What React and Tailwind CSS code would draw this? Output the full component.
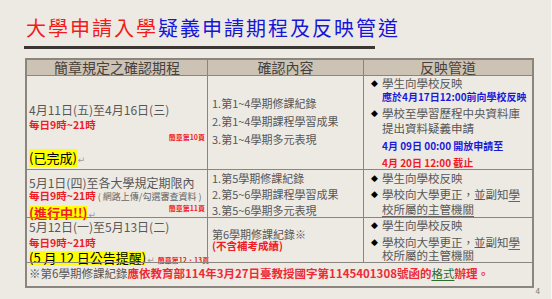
import React from "react";

function Ret() {
  return <span className="ml-[1px] font-['DejaVu_Sans',sans-serif] text-[9px] text-[#a09c98]">↵</span>;
}

function Bullet({ children, className = "" }) {
  return (
    <div className={"flex " + className}>
      <span className="-ml-[11px] w-[11px] shrink-0 font-['DejaVu_Sans',sans-serif] text-[9px] text-black">◆</span>
      <div>{children}</div>
    </div>
  );
}

const line = "border-[#8b8580]";

export default function App() {
  return (
    <div className="h-[299px] w-[552px] overflow-hidden border-r border-[#f8f7f4] bg-[#edeae4] font-['Noto_Sans_CJK_TC',sans-serif]">
      <div className="pl-[26px] pt-[16px] text-[20px] leading-[24px] tracking-[2px] whitespace-nowrap">
        <span className="text-[#f21b1b]">大學申請入學</span>
        <span className="text-[#1616d8]">疑義申請期程及反映管道</span>
      </div>
      <div className="ml-[24px] mt-[6px] h-[3px] w-[351px] bg-[#3b3633]" />

      <div
        className={
          "ml-[25px] mt-[9px] grid w-[509px] grid-cols-[180px_156px_169px] grid-rows-[15px_94px_48px_45px_24px] border-2 text-[#575757] " +
          line
        }
      >
        {/* header */}
        <div className="bg-[#cdc3b4] text-center text-[14px] leading-[15px] text-[#46413c]">簡章規定之確認期程</div>
        <div className={"border-l bg-[#cdc3b4] text-center text-[14px] leading-[15px] text-[#46413c] " + line}>確認內容</div>
        <div className={"border-l bg-[#cdc3b4] text-center text-[14px] leading-[15px] text-[#46413c] " + line}>反映管道</div>

        {/* row 1 */}
        <div className={"border-t px-[2px] pt-[26px] " + line}>
          <div className="text-[12px] leading-[16px] whitespace-nowrap">4月11日(五)至4月16日(三)</div>
          <div className="text-[10.5px] font-bold leading-[14px] text-[#ee1c25]">每日9時~21時</div>
          <div className="text-right text-[7px] font-bold leading-[10px] text-[#ee1c25]">簡章第10頁</div>
          <div className="mt-[5px] leading-[18px]">
            <span className="inline-block bg-[#ffff00] text-[13px] leading-[18px] text-black">(已完成)</span>
            <Ret />
          </div>
        </div>
        <div className={"border-t border-l pl-[4px] pt-[18px] text-[11px] leading-[18px] whitespace-nowrap " + line}>
          <div>1.第1~4學期修課紀錄</div>
          <div>2.第1~4學期課程學習成果</div>
          <div>3.第1~4學期多元表現</div>
        </div>
        <div className={"border-t border-l pl-[18px] text-[11.5px] whitespace-nowrap " + line}>
          <Bullet className="leading-[14px]">學生向學校反映</Bullet>
          <div className="text-[10px] font-bold leading-[14px] text-[#1a1ad8]">應於4月17日12:00前向學校反映</div>
          <Bullet className="mt-[1px] leading-[16px]">
            學校至學習歷程中央資料庫
            <div className="leading-[14px]">提出資料疑義申請</div>
          </Bullet>
          <div className="mt-[3px] text-[10px] font-bold leading-[16px] text-[#1a1ad8]">4月 09日 00:00 開放申請至</div>
          <div className="text-[10px] font-bold leading-[18px] text-[#ee1c25]">4月 20日 12:00 截止</div>
        </div>

        {/* row 2 */}
        <div className={"border-t px-[2px] pt-[6px] " + line}>
          <div className="text-[12px] leading-[14px] whitespace-nowrap">5月1日(四)至各大學規定期限內</div>
          <div className="text-[10.5px] leading-[12px] whitespace-nowrap">
            <span className="font-bold text-[#ee1c25]">每日9時~21時</span>
            <span className="text-[9px] text-[#666]"> ( 網路上傳/勾選審查資料 )</span>
          </div>
          <div className="mt-[1px] flex items-start justify-between">
            <div className="leading-[14px]">
              <span className="inline-block bg-[#ffff00] text-[13px] font-bold leading-[14px] text-[#ee1c25]">(進行中!!)</span>
              <Ret />
            </div>
            <div className="text-[7px] font-bold leading-[8px] text-[#ee1c25]">簡章第11頁</div>
          </div>
        </div>
        <div className={"border-t border-l pl-[4px] text-[11px] leading-[16px] whitespace-nowrap " + line}>
          <div>1.第5學期修課紀錄</div>
          <div>2.第5~6學期課程學習成果</div>
          <div>3.第5~6學期多元表現</div>
        </div>
        <div className={"border-t border-l pl-[18px] text-[11.5px] whitespace-nowrap " + line}>
          <Bullet className="leading-[16px]">學生向學校反映</Bullet>
          <Bullet className="leading-[16px]">
            學校向大學更正，並副知<span className="underline decoration-[#666] underline-offset-2">學</span>
            <div className="leading-[15px] underline decoration-[#666] underline-offset-2">校所屬的主管機關</div>
          </Bullet>
        </div>

        {/* row 3 */}
        <div className={"border-t px-[2px] pt-[2px] " + line}>
          <div className="text-[12px] leading-[14px] whitespace-nowrap">5月12日(一)至5月13日(二)</div>
          <div className="mt-[3px] text-[10.5px] font-bold leading-[12px] text-[#ee1c25]">每日9時~21時</div>
          <div className="leading-[14px] whitespace-nowrap">
            <span className="inline-block bg-[#ffff00] text-[13px] leading-[14px] text-black">(5 月 12 日公告提醒)</span>
            <Ret />
            <span className="ml-[3px] text-[7px] font-bold text-[#ee1c25]">簡章第12．13頁</span>
          </div>
        </div>
        <div className={"border-t border-l pl-[4px] pt-[10px] text-[11px] leading-[12px] whitespace-nowrap " + line}>
          <div>第6學期修課紀錄※</div>
          <div className="text-[10.5px] font-bold text-[#ee1c25]">(不含補考成績)</div>
        </div>
        <div className={"border-t border-l pl-[18px] text-[11.5px] whitespace-nowrap " + line}>
          <Bullet className="leading-[14px]">學生向學校反映</Bullet>
          <Bullet className="mt-[3px] leading-[14px]">
            學校向大學更正，並副知<span className="underline decoration-[#666] underline-offset-2">學</span>
            <div className="leading-[13px] underline decoration-[#666] underline-offset-2">校所屬的主管機關</div>
          </Bullet>
        </div>

        {/* row 4 */}
        <div className={"col-span-3 border-t pl-[2px] pt-[2px] text-[11.5px] leading-[16px] whitespace-nowrap " + line}>
          <span>※第6學期修課紀錄</span>
          <span className="font-bold text-[#ee2a36]">應依教育部114年3月27日臺教授國字第1145401308號函的</span>
          <span className="text-[#2f6b2f] underline underline-offset-2">格式</span>
          <span className="font-bold text-[#ee2a36]">辦理。</span>
        </div>
      </div>

      <div className="-mt-[1px] w-[540px] text-right text-[8px] leading-[8px] text-[#777]">4</div>
    </div>
  );
}
